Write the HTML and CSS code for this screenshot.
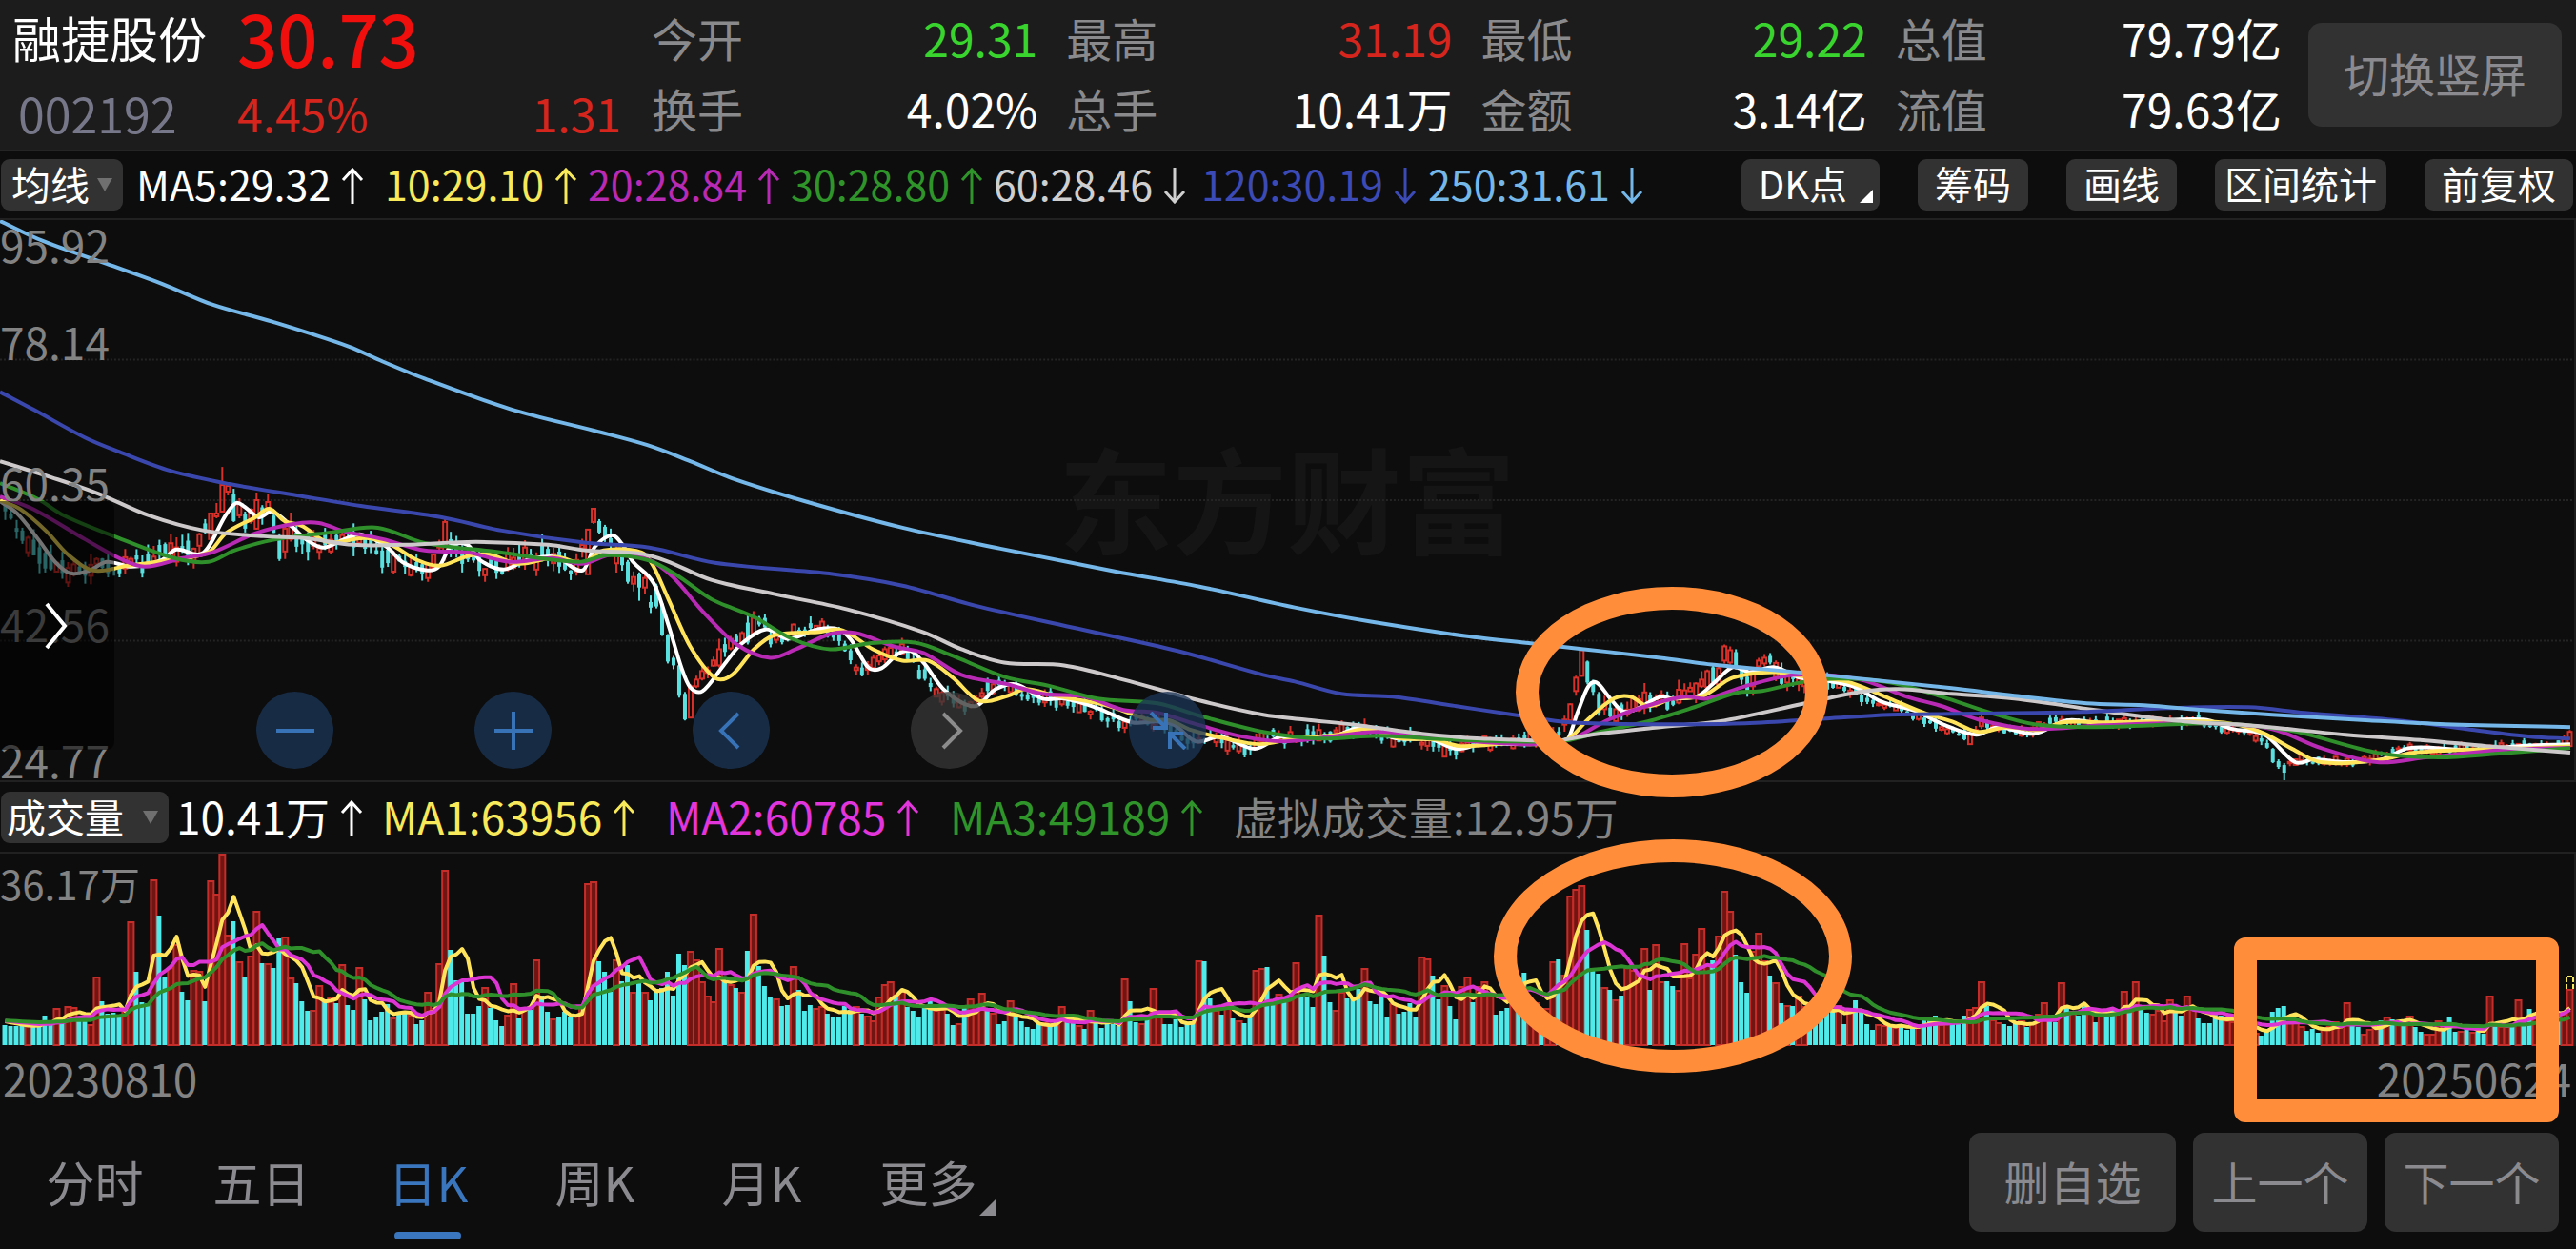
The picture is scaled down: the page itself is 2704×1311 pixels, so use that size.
FILE: index.html
```html
<!DOCTYPE html>
<html lang="zh-CN">
<head>
    <meta charset="utf-8">
    <title>融捷股份 002192</title>
    <link rel="stylesheet" href="styles.css">
</head>
<body>
    <svg width="0" height="0" class="defs">
        <symbol id="up" viewBox="0 0 24 38"><path d="M12 38V2M2 13L12 2l10 11" /></symbol>
        <symbol id="down" viewBox="0 0 24 38"><path d="M12 0v36M2 25l10 11 10-11" /></symbol>
    </svg>

    <header class="header">
        <div class="quote">
            <h1 class="name">融捷股份</h1>
            <div class="price">30.73</div>
            <div class="code">002192</div>
            <div class="change"><span>4.45%</span><span>1.31</span></div>
        </div>
        <dl class="stats">
            <div><dt>今开</dt><dd class="fall">29.31</dd></div>
            <div><dt>最高</dt><dd class="rise">31.19</dd></div>
            <div><dt>最低</dt><dd class="fall">29.22</dd></div>
            <div><dt>总值</dt><dd>79.79亿</dd></div>
            <div><dt>换手</dt><dd>4.02%</dd></div>
            <div><dt>总手</dt><dd>10.41万</dd></div>
            <div><dt>金额</dt><dd>3.14亿</dd></div>
            <div><dt>流值</dt><dd>79.63亿</dd></div>
        </dl>
        <button class="rotate">切换竖屏</button>
    </header>

    <div class="bar">
        <div class="picker">
            <select aria-label="主图指标"><option>均线</option><option>BOLL</option></select>
            <svg class="caret" viewBox="0 0 16 14"><path d="M0 0h16L8 14z" /></svg>
        </div>
        <ul class="legend legend-price">
            <li class="c-white">MA5:29.32<svg class="arrow"><use href="#up" /></svg></li>
            <li class="c-yellow">10:29.10<svg class="arrow"><use href="#up" /></svg></li>
            <li class="c-purple">20:28.84<svg class="arrow"><use href="#up" /></svg></li>
            <li class="c-green">30:28.80<svg class="arrow"><use href="#up" /></svg></li>
            <li class="c-silver">60:28.46<svg class="arrow"><use href="#down" /></svg></li>
            <li class="c-blue">120:30.19<svg class="arrow"><use href="#down" /></svg></li>
            <li class="c-sky">250:31.61<svg class="arrow"><use href="#down" /></svg></li>
        </ul>
        <div class="tools">
            <button class="tool has-corner">DK点</button>
            <button class="tool">筹码</button>
            <button class="tool">画线</button>
            <button class="tool tool-tight">区间统计</button>
            <button class="tool">前复权</button>
        </div>
    </div>

    <main class="charts">
        <div class="price-chart">
            <div class="watermark">东方财富</div>
            <svg id="price" class="plot" viewBox="0 231 2704 590" preserveAspectRatio="none"></svg>
            <div class="scale">
                <span>95.92</span>
                <span>78.14</span>
                <span>60.35</span>
                <span>42.56</span>
                <span>24.77</span>
            </div>
            <button class="drawer" aria-label="展开">
                <svg viewBox="0 0 24 50"><path d="M2 2l19 23L2 48" /></svg>
            </button>
            <div class="controls">
                <button aria-label="缩小"><svg viewBox="0 0 40 40"><path d="M0 20h40" /></svg></button>
                <button aria-label="放大"><svg viewBox="0 0 40 40"><path d="M0 20h40M20 0v40" /></svg></button>
                <button aria-label="左移"><svg viewBox="0 0 40 40"><path d="M27 2L9 20l18 18" /></svg></button>
                <button aria-label="右移" disabled><svg viewBox="0 0 40 40"><path d="M13 2l18 18-18 18" /></svg></button>
                <button aria-label="收起"><svg viewBox="0 0 40 40"><path d="M2 1l16 16M18 1v16H4M38 39L22 23M22 39V23h14" /></svg></button>
            </div>
        </div>

        <div class="bar bar-volume">
            <div class="picker picker-volume">
                <select aria-label="副图指标"><option>成交量</option><option>MACD</option></select>
                <svg class="caret" viewBox="0 0 16 14"><path d="M0 0h16L8 14z" /></svg>
            </div>
            <ul class="legend legend-volume">
                <li class="c-white">10.41万<svg class="arrow"><use href="#up" /></svg></li>
                <li class="c-yellow">MA1:63956<svg class="arrow"><use href="#up" /></svg></li>
                <li class="c-pink">MA2:60785<svg class="arrow"><use href="#up" /></svg></li>
                <li class="c-green">MA3:49189<svg class="arrow"><use href="#up" /></svg></li>
                <li class="c-gray">虚拟成交量:12.95万</li>
            </ul>
        </div>

        <div class="volume-chart">
            <svg id="volume" class="plot" viewBox="0 0 2704 202" preserveAspectRatio="none"></svg>
            <span class="volume-max">36.17万</span>
        </div>
        <div class="dates"><span>20230810</span><span>20250624</span></div>

        <div class="mark mark-price"></div>
        <div class="mark mark-volume"></div>
        <div class="mark mark-recent"></div>
    </main>

    <footer class="footer">
        <nav class="tabs">
            <a href="#">分时</a>
            <a href="#">五日</a>
            <a href="#" class="active">日K</a>
            <a href="#">周K</a>
            <a href="#">月K</a>
            <a href="#" class="has-corner">更多</a>
        </nav>
        <div class="actions">
            <button class="action-wide">删自选</button>
            <button>上一个</button>
            <button>下一个</button>
        </div>
    </footer>
    <script src="chart.js"></script>
</body>
</html>
```

FILE: styles.css
```css
* {
    box-sizing: border-box;
}

body {
    margin: 0;
    background-color: #0d0d0d;
    color: #fff;
    font-family: "Noto Sans CJK SC", "Noto Sans", sans-serif;
    overflow: hidden;
}

h1, dl, dd, ul {
    margin: 0;
    padding: 0;
}

ul {
    list-style: none;
}

button, select {
    border: 0;
    margin: 0;
    padding: 0;
    color: inherit;
    font: inherit;
    background-color: #323232;
}

.defs {
    position: absolute;
}

/* header */
.header {
    display: flex;
    height: 159px;
    background-color: #1c1c1c;
    border-bottom: 2px solid #252525;
}

.quote {
    display: grid;
    grid-template-columns: 236px 403px;
    grid-template-rows: 78px 80px;
    align-items: center;
    padding-left: 13px;
    line-height: 76px;
}

.name {
    font-size: 51px;
    font-weight: 400;
}

.price {
    color: #f00f0c;
    font-size: 74px;
    font-weight: 500;
}

.code {
    padding-left: 6px;
    color: #77778a;
    font-size: 50px;
}

.change {
    display: flex;
    justify-content: space-between;
    color: #d6251d;
    font-size: 48px;
}

.stats {
    flex: 1;
    display: grid;
    grid-template-columns: repeat(4, 1fr);
    grid-auto-rows: 74px;
    column-gap: 30px;
    margin: 2px 28px 0 32px;
    font-size: 48px;
    line-height: 74px;
}

    .stats div {
        display: flex;
        justify-content: space-between;
    }

    .stats dt {
        color: #8a8a8d;
    }

.rise {
    color: #d6251d;
}

.fall {
    color: #3ad42f;
}

.rotate {
    width: 266px;
    height: 109px;
    margin: 24px 15px 0 0;
    padding-bottom: 6px;
    border-radius: 14px;
    color: #8a8a8f;
    font-size: 48px;
}

/* indicator rows */
.bar {
    display: flex;
    align-items: center;
    height: 72px;
    padding: 0 3px 0 1px;
    border-bottom: 2px solid #212121;
}

.bar-volume {
    height: 75px;
}

.picker {
    position: relative;
    width: 128px;
    margin-right: 14px;
    font-size: 41px;
}

    .picker select {
        display: block;
        width: 100%;
        height: 54px;
        padding-left: 11px;
        padding-bottom: 4px;
        border-radius: 9px;
        line-height: 50px;
        appearance: none;
    }

.picker-volume {
    width: 176px;
    margin-right: 8px;
}

    .picker-volume select {
        padding-left: 6px;
    }

.caret {
    position: absolute;
    right: 11px;
    top: 20px;
    width: 16px;
    height: 14px;
    fill: #707070;
    pointer-events: none;
}

.legend {
    display: grid;
    padding-bottom: 4px;
    white-space: nowrap;
}

    .legend li {
        display: flex;
        align-items: center;
        line-height: 60px;
    }

.legend-price {
    grid-template-columns: 261px repeat(3, 213px) 218px 238px auto;
    font-size: 43px;
}

.legend-volume {
    grid-template-columns: 216px repeat(3, 298px) auto;
    font-size: 46px;
}

.arrow {
    width: 24px;
    height: 38px;
    margin-top: 6px;
    margin-left: 11px;
    fill: none;
    stroke: currentColor;
    stroke-width: 3;
}

.c-white { color: #fff; }
.c-yellow { color: #f7e95a; }
.c-purple { color: #b829b4; }
.c-pink { color: #e335dc; }
.c-green { color: #2f942a; }
.c-silver { color: #cfcfcf; }
.c-blue { color: #3c4ab5; }
.c-sky { color: #74b7e8; }
.c-gray { color: #838383; }

.tools {
    display: flex;
    gap: 40px;
    margin-left: auto;
}

.tool {
    height: 54px;
    padding: 0 18px 4px;
    border-radius: 9px;
    font-size: 40px;
    line-height: 48px;
    white-space: nowrap;
}

.tool-tight {
    padding: 0 10px 4px;
}

.has-corner {
    position: relative;
}

    .has-corner::after {
        content: "";
        position: absolute;
        right: 7px;
        bottom: 8px;
        border-left: 14px solid transparent;
        border-bottom: 14px solid currentColor;
    }

.tool.has-corner {
    padding-right: 34px;
}

/* charts */
.charts {
    position: relative;
}

.plot {
    position: relative;
    display: block;
    width: 100%;
    height: 100%;
    fill: none;
}

.price-chart {
    position: relative;
    height: 590px;
    border-bottom: 2px solid #212121;
    border-right: 2px solid #1d1d1d;
}

.watermark {
    position: absolute;
    top: 0;
    left: 0;
    width: 100%;
    color: #151515;
    font-size: 120px;
    font-weight: 700;
    line-height: 580px;
    text-align: center;
}

.scale {
    position: absolute;
    top: 0;
    left: 0;
    display: grid;
    grid-template-rows: 50px 102px 148px 148px 143px;
    align-items: end;
    color: #838383;
    font-size: 46px;
    line-height: 50px;
}

.drawer {
    position: absolute;
    top: 295px;
    left: 0;
    width: 120px;
    height: 261px;
    padding-right: 3px;
    border-radius: 0 8px 8px 0;
    background-color: rgba(0, 0, 0, 0.55);
}

    .drawer svg {
        display: inline-block;
        width: 24px;
        height: 50px;
        fill: none;
        stroke: #fff;
        stroke-width: 4;
        vertical-align: top;
    }

.controls {
    position: absolute;
    left: 269px;
    bottom: 12px;
    display: flex;
    gap: 148px;
}

    .controls button {
        display: flex;
        align-items: center;
        justify-content: center;
        width: 81px;
        height: 81px;
        border-radius: 50%;
        background-color: rgba(27, 52, 86, 0.78);
        color: #3873b8;
    }

    .controls button:disabled {
        background-color: rgba(54, 54, 54, 0.78);
        color: #8c8c8c;
    }

    .controls svg {
        width: 40px;
        height: 40px;
        fill: none;
        stroke: currentColor;
        stroke-width: 4;
    }

.volume-chart {
    position: relative;
    height: 202px;
    border-right: 2px solid #1d1d1d;
}

.volume-max {
    position: absolute;
    top: 2px;
    left: 0;
    color: #838383;
    font-size: 42px;
    line-height: 58px;
}

.dates {
    display: flex;
    justify-content: space-between;
    padding: 0 5px 2px 3px;
    color: #838383;
    font-size: 46px;
    line-height: 66px;
}

/* hand-drawn highlights */
.mark {
    position: absolute;
    border: 24px solid #ff8d3a;
    border-radius: 50%;
}

.mark-price {
    left: 1591px;
    top: 385px;
    width: 328px;
    height: 221px;
}

.mark-volume {
    left: 1568px;
    top: 650px;
    width: 376px;
    height: 245px;
}

.mark-recent {
    right: 18px;
    top: 753px;
    width: 341px;
    height: 194px;
    border-radius: 12px;
}

/* bottom */
.footer {
    display: flex;
    justify-content: space-between;
    padding: 23px 18px 18px 12px;
}

.tabs {
    display: flex;
}

    .tabs a {
        position: relative;
        width: 175px;
        color: #8a8a8f;
        font-size: 51px;
        line-height: 102px;
        text-align: center;
        text-decoration: none;
    }

    .tabs .active {
        color: #3a76bd;
    }

    .tabs .active::after {
        content: "";
        position: absolute;
        left: 52px;
        bottom: -8px;
        width: 70px;
        height: 8px;
        border-radius: 4px;
        background-color: #3a76bd;
    }

    .tabs .has-corner::after {
        right: 17px;
        bottom: 17px;
        border-left-width: 17px;
        border-bottom-width: 17px;
    }

.actions {
    display: flex;
    gap: 18px;
}

    .actions button {
        width: 183px;
        height: 104px;
        padding-bottom: 4px;
        border-radius: 12px;
        color: #8a8a8f;
        font-size: 48px;
    }

    .actions .action-wide {
        width: 217px;
    }
```

FILE: chart.js
```js
// one bar per trading day, 6 units apart; negative = closed down
var STEP = 6, FIRST = 5.5;
var vol = [
    -21,-20,-20,-20,21,-20,-21,-31,-23,39,-24,41,40,-29,-30,22,72,-46,-33,-34,-29,37,130,-77,-45,-44,174,-136,-72,82,
    106,-56,-47,79,78,-46,173,159,201,116,-130,88,-72,94,141,-86,86,-81,-112,114,71,-65,-46,-36,37,63,-47,51,-44,85,
    -42,-37,82,-48,-26,-30,-35,-43,29,-32,-34,32,-22,-26,56,39,86,184,-100,-68,-67,-33,-33,-41,61,-39,-26,-20,32,65,
    -28,39,-37,90,-52,-35,28,-29,-35,-30,32,39,170,172,-88,-77,-56,90,-67,-84,56,-65,56,-47,-59,-60,-77,-52,-96,-84,
    99,90,67,52,46,102,-67,64,-60,56,-99,138,-83,-62,-51,49,-41,-42,83,-58,-36,-42,39,41,-33,-30,-30,-41,-37,41,
    -33,31,26,51,64,67,-51,57,-40,-36,-30,-39,-47,37,38,-33,-21,23,-39,49,41,55,-36,34,-22,-25,47,-30,-25,-19,
    -17,-22,24,-22,-24,41,-25,-24,21,-17,37,-24,-18,-23,-22,-20,70,-46,-24,23,-29,60,31,-22,-22,-27,-19,-24,-24,89,
    -88,-49,37,-32,42,-28,26,-23,-31,79,81,-82,-44,54,-46,52,87,-52,-51,-40,137,-94,-45,37,56,-49,-51,-59,81,-46,
    -43,-56,-30,44,-33,-35,-44,-30,93,91,-73,-48,63,-41,-27,62,72,-45,62,67,52,-32,-36,-39,102,-71,-76,46,45,-39,
    39,88,-90,74,157,164,168,-121,-81,-75,61,-58,48,-52,82,79,76,102,-58,106,67,-67,-62,58,107,71,96,123,86,-89,
    115,162,141,-95,-66,-55,99,118,89,-73,66,-44,42,-41,52,41,-37,-39,-32,-37,-35,42,-22,36,-47,-36,-22,-16,22,21,
    -21,19,-19,-16,-20,21,-29,-26,-31,22,23,-24,-22,-31,38,40,67,-41,27,24,-22,-20,-23,26,-19,24,33,45,-26,-24,
    66,-42,36,-31,-44,36,-24,36,-31,-39,37,57,-39,67,-38,-34,33,37,26,48,-34,-31,52,39,-28,-23,-23,-32,-31,26,
    25,22,-18,18,13,-10,-15,-35,-39,-41,24,24,20,-15,-17,-13,19,20,25,20,45,-22,-19,12,17,19,-26,30,-27,22,
    -23,31,-19,-14,12,12,26,-17,-30,-14,15,-19,14,-14,-12,52,-22,20,20,-22,48,-26,-38,30,-34,28,36,-36,36,59
];

// moving averages of the price, x,y pairs
var ma250 = '0,232 45,253 112,277 170,298 223,320 286,338 366,364 402,380 446,398 536,430 625,453 680,468 725,485 769,503 845,527 948,555 1051,577 1171,601 1260,617 1360,639 1440,654 1539,669 1610,677 1664,683 1744,692 1798,699 1896,708 2050,724 2116,732 2192,740 2252,742 2315,747 2387,752 2489,758 2569,762 2700,765';
var ma120 = '0,412 36,431 89,460 125,475 179,495 241,509 312,521 379,532 464,544 527,558 616,571 682,576 751,592 876,604 948,616 1024,637 1126,660 1238,685 1327,710 1360,717 1409,730 1463,733 1530,743 1597,753 1650,760 1739,762 1833,761 1918,756 1985,752 2050,751 2188,749 2277,745 2362,744 2421,750 2519,758 2591,767 2658,775 2700,777';
var ma60 = '0,485 54,502 103,519 156,542 214,558 277,564 321,566 371,573 424,573 500,570 576,573 616,579 670,582 700,590 747,610 814,625 890,641 970,665 1010,683 1055,697 1118,700 1180,715 1260,737 1327,752 1370,757 1427,763 1494,772 1556,777 1637,779 1672,773 1744,765 1806,759 1896,740 1954,728 1994,725 2050,730 2116,735 2201,747 2294,759 2362,763 2464,773 2548,779 2612,785 2700,792';
var ma30 = '0,508 40,525 67,542 125,566 183,587 219,591 246,579 286,568 348,560 397,555 446,571 518,580 607,591 638,584 680,589 711,605 747,630 792,649 832,672 872,683 912,677 961,676 1001,690 1055,712 1104,722 1153,735 1216,740 1260,753 1327,770 1387,777 1449,774 1503,777 1583,780 1646,779 1681,770 1731,759 1780,744 1824,729 1851,727 1891,718 1931,714 1985,718 2040,733 2091,750 2137,762 2197,765 2320,761 2362,763 2413,770 2497,792 2561,797 2625,793 2700,787';
var ma20 = '0,522 36,536 89,567 125,587 152,596 192,587 223,581 268,561 308,551 335,550 362,559 402,567 446,579 491,581 536,591 580,587 612,593 643,583 680,588 707,607 738,643 774,678 809,692 836,683 872,667 899,666 939,680 970,687 1010,710 1059,720 1095,730 1140,733 1180,747 1216,750 1260,763 1305,775 1350,780 1414,773 1449,770 1503,775 1548,780 1610,783 1650,778 1690,757 1739,740 1771,733 1793,735 1833,722 1887,710 1954,715 2003,733 2040,743 2078,757 2133,767 2209,763 2320,761 2387,767 2438,787 2497,802 2548,797 2633,789 2700,787';
var ma10 = '0,526 22,536 49,559 71,583 98,600 134,595 179,589 219,581 237,561 268,544 283,535 299,548 317,553 344,570 384,566 411,573 438,589 462,595 491,585 513,583 545,593 585,586 612,592 634,579 674,581 686,595 702,630 725,680 751,713 769,710 792,683 814,668 859,665 885,663 917,683 948,695 975,695 1001,713 1028,737 1059,732 1077,725 1109,732 1162,742 1207,757 1229,758 1251,768 1287,777 1323,783 1360,777 1405,773 1436,767 1472,777 1507,778 1534,785 1583,782 1646,778 1668,757 1695,735 1713,733 1731,743 1757,735 1789,732 1820,713 1864,707 1896,712 1940,717 1985,735 2021,750 2050,759 2078,770 2108,765 2142,768 2167,760 2209,760 2320,759 2353,763 2379,772 2408,788 2438,802 2497,800 2536,792 2591,789 2667,787 2700,785';
var ma5 = '0,527 18,540 40,567 58,591 74,603 94,600 112,591 138,596 170,589 185,578 214,581 237,542 248,529 257,533 272,544 286,538 308,555 321,567 339,576 362,567 379,562 406,575 424,592 449,600 462,595 473,575 491,573 504,589 529,599 554,589 585,586 612,600 625,575 643,563 654,573 665,591 687,614 702,657 716,703 725,723 738,727 760,700 778,678 805,662 827,672 859,662 881,662 894,673 912,702 926,703 943,688 957,685 970,697 993,727 1024,743 1046,725 1068,720 1095,735 1118,735 1153,745 1189,760 1216,759 1234,763 1256,780 1283,775 1318,788 1345,775 1360,777 1400,775 1431,765 1467,777 1503,778 1530,788 1556,783 1646,778 1657,750 1668,723 1677,718 1690,733 1704,748 1717,747 1744,733 1757,735 1784,732 1802,717 1820,702 1838,707 1864,702 1891,713 1923,717 1949,723 1976,738 2012,748 2043,763 2076,773 2099,765 2137,772 2171,758 2209,761 2315,757 2345,767 2379,773 2411,802 2430,799 2464,802 2502,799 2531,787 2591,789 2646,785 2700,783';

// days far from the average: [high, body top, body bottom, low]
var special = {
    36: [540, 540, 567, 567], 37: [529, 540, 543, 545], 38: [491, 510, 538, 538], 39: [509, 511, 517, 521],
    40: [514, 520, 548, 549], 41: [524, 530, 542, 545], 42: [538, 540, 556, 560], 44: [518, 526, 556, 557],
    46: [520, 528, 534, 540], 48: [561, 563, 588, 590], 49: [545, 556, 580, 588], 77: [544, 549, 580, 590],
    102: [557, 557, 604, 604], 103: [534, 535, 549, 551], 104: [546, 548, 560, 562], 105: [552, 554, 566, 570],
    109: [589, 591, 612, 614], 110: [601, 607, 614, 622], 111: [602, 604, 618, 632], 112: [602, 608, 618, 625],
    114: [614, 616, 638, 640], 115: [634, 635, 668, 669], 116: [667, 668, 696, 698], 117: [690, 692, 700, 704],
    118: [699, 700, 732, 734], 119: [728, 730, 757, 758], 120: [720, 722, 755, 755], 121: [711, 715, 722, 724],
    122: [700, 706, 714, 716], 125: [672, 683, 700, 702], 127: [669, 672, 682, 684], 129: [664, 666, 676, 678],
    130: [646, 655, 676, 678], 131: [643, 650, 666, 668], 132: [648, 650, 657, 659], 133: [646, 650, 660, 662],
    274: [740, 741, 758, 760], 275: [711, 713, 727, 732], 276: [683, 684, 711, 712], 277: [695, 696, 718, 720],
    278: [715, 718, 728, 732], 279: [728, 730, 750, 753], 297: [706, 715, 722, 724], 299: [700, 702, 718, 721],
    300: [701, 703, 720, 722], 301: [678, 680, 695, 698], 302: [680, 684, 697, 699], 303: [683, 686, 702, 704],
    305: [710, 712, 728, 733], 306: [702, 706, 722, 732], 307: [692, 695, 701, 703], 308: [688, 692, 698, 701],
    309: [687, 690, 697, 699], 312: [707, 710, 718, 727], 343: [766, 768, 778, 779], 344: [770, 773, 783, 783],
    346: [752, 755, 764, 767], 397: [787, 788, 802, 803], 398: [799, 801, 807, 809], 399: [803, 805, 813, 821],
    449: [768, 770, 785, 786]
};

function parse(s) {
    return s.split(' ').map(function (p) { return p.split(',').map(Number); });
}

function at(pts, x) {
    for (var i = 1; i < pts.length; i++) {
        if (x <= pts[i][0]) {
            var a = pts[i - 1], b = pts[i];
            return a[1] + (b[1] - a[1]) * (x - a[0]) / (b[0] - a[0]);
        }
    }
    return pts[pts.length - 1][1];
}

function noise(n) {
    var v = Math.sin(n * 127.1) * 43758.5453;
    return v - Math.floor(v);
}

// smooth curve through the points
function curve(pts) {
    var d = 'M' + pts[0];
    for (var i = 0; i < pts.length - 1; i++) {
        var p0 = pts[i - 1] || pts[i], p1 = pts[i], p2 = pts[i + 1], p3 = pts[i + 2] || p2;
        var k = (p2[0] - p1[0]) / 3;
        var s1 = (p2[1] - p0[1]) / (p2[0] - p0[0]), s2 = (p3[1] - p1[1]) / (p3[0] - p1[0]);
        d += 'C' + (p1[0] + k) + ',' + (p1[1] + k * s1) + ' ' + (p2[0] - k) + ',' + (p2[1] - k * s2) + ' ' + p2;
    }
    return d;
}

function line(d, color, w) {
    return '<path d="' + d + '" stroke="' + color + '" stroke-width="' + w + '" stroke-linejoin="round"/>';
}

function rect(x, y, w, h, attrs) {
    return '<rect x="' + x + '" y="' + y + '" width="' + w + '" height="' + h + '" ' + attrs + '/>';
}

function drawPrice() {
    var out = '', avg = parse(ma5);
    [378, 526, 674].forEach(function (y) {
        out += '<path d="M0 ' + y + 'H2704" stroke="#242424" stroke-width="2" stroke-dasharray="2 2"/>';
    });
    vol.forEach(function (v, i) {
        var x = FIRST + i * STEP, s = special[i];
        if (!s) {
            // calmer market after the sell-off
            var calm = x < 700 ? 1 : x < 1640 ? 0.6 : x < 1930 ? 0.9 : 0.4;
            var mid = at(avg, Math.min(x + 11, 2700)) + (noise(i) - 0.5) * 14 * calm;
            var body = (3 + noise(i + 500) * 16) * calm / 2;
            s = [mid - body - noise(i + 900) * 12 * calm, mid - body, mid + body, mid + body + noise(i + 1300) * 10 * calm];
        }
        if (v > 0) {
            out += '<path d="M' + x + ' ' + s[0] + 'V' + s[1] + 'M' + x + ' ' + s[2] + 'V' + s[3] + '" stroke="#d8302a" stroke-width="2"/>';
            out += rect(x - 2, s[1], 4, Math.max(s[2] - s[1], 1), 'stroke="#d8302a" stroke-width="2"');
        } else {
            out += rect(x - 1, s[0], 2, s[3] - s[0], 'fill="#5be0e0"');
            out += rect(x - 2, s[1], 4, Math.max(s[2] - s[1], 1), 'fill="#5be0e0"');
        }
    });
    out += line(curve(avg), '#ffffff', 4);
    out += line(curve(parse(ma10)), '#ffe45c', 4);
    out += line(curve(parse(ma20)), '#b829b4', 4);
    out += line(curve(parse(ma30)), '#2f8f2a', 4);
    out += line(curve(parse(ma60)), '#cdc9cb', 4);
    out += line(curve(parse(ma120)), '#3a47ad', 4);
    out += line(curve(parse(ma250)), '#74b7e8', 4);
    document.getElementById('price').innerHTML = out;
}

function average(n) {
    return 'M' + vol.map(function (v, i) {
        var sum = 0;
        for (var j = i - n + 1; j <= i; j++) sum += j < 0 ? 26 : Math.abs(vol[j]);
        return (FIRST + i * STEP) + ',' + (201 - sum / n);
    }).join('L');
}

function drawVolume() {
    var out = '';
    vol.forEach(function (v, i) {
        var x = FIRST + i * STEP;
        if (v > 0) out += rect(x - 3, 201 - v + 1, 6, v - 1, 'fill="#701512" stroke="#c42d29" stroke-width="2"');
    });
    vol.forEach(function (v, i) {
        var x = FIRST + i * STEP;
        if (v < 0) out += rect(x - 3, 201 + v, 5, -v, 'fill="#4feaea"');
    });
    // projected volume of the running day
    out += '<path d="M2696 142V129H2703V142" stroke="#f7e95a" stroke-width="2" stroke-dasharray="5 2"/>';
    out += line(average(5), '#ffe45c', 4);
    out += line(average(10), '#dd35d4', 4);
    out += line(average(20), '#2f8f2a', 4);
    document.getElementById('volume').innerHTML = out;
}

drawPrice();
drawVolume();
```
